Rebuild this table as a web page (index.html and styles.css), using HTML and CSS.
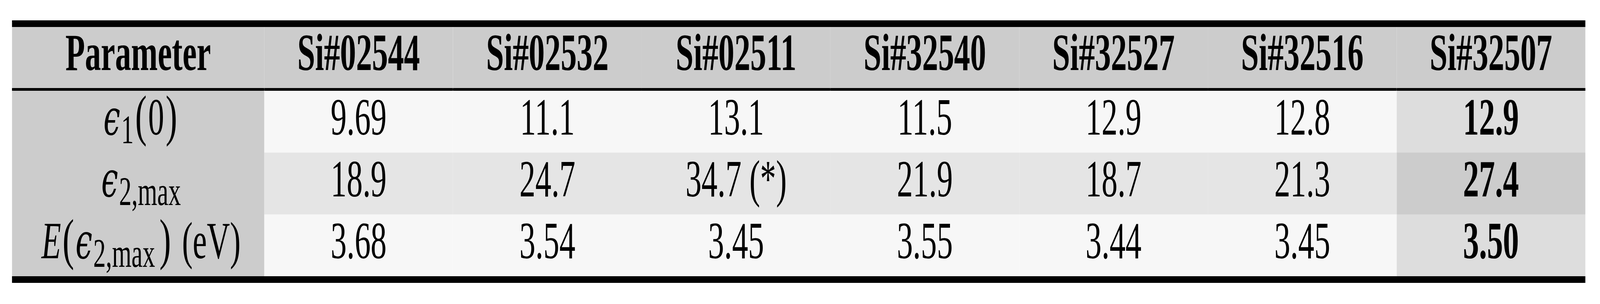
FILE: index.html
```html
<!DOCTYPE html>
<html>
<head>
<meta charset="utf-8">
<link rel="stylesheet" href="styles.css">
</head>
<body>
<div class="frame">
  <div class="page" id="page">
    <div class="table">
      <div class="cell head">Parameter</div>
      <div class="cell head">Si#02544</div>
      <div class="cell head">Si#02532</div>
      <div class="cell head">Si#02511</div>
      <div class="cell head">Si#32540</div>
      <div class="cell head">Si#32527</div>
      <div class="cell head">Si#32516</div>
      <div class="cell head">Si#32507</div>

      <div class="cell param"><span class="eps">ϵ</span><span class="sub">1</span><span class="big">(</span>0<span class="big">)</span></div>
      <div class="cell light">9.69</div>
      <div class="cell light">11.1</div>
      <div class="cell light">13.1</div>
      <div class="cell light">11.5</div>
      <div class="cell light">12.9</div>
      <div class="cell light">12.8</div>
      <div class="cell best-light">12.9</div>

      <div class="cell param"><span class="eps">ϵ</span><span class="sub">2,max</span></div>
      <div class="cell mid">18.9</div>
      <div class="cell mid">24.7</div>
      <div class="cell mid">34.7 (*)</div>
      <div class="cell mid">21.9</div>
      <div class="cell mid">18.7</div>
      <div class="cell mid">21.3</div>
      <div class="cell best-mid">27.4</div>

      <div class="cell param"><span class="ital">E</span><span class="big">(</span><span class="eps">ϵ</span><span class="sub sub-close">2,max</span><span class="big">)</span><span class="unit">(eV)</span></div>
      <div class="cell light">3.68</div>
      <div class="cell light">3.54</div>
      <div class="cell light">3.45</div>
      <div class="cell light">3.55</div>
      <div class="cell light">3.44</div>
      <div class="cell light">3.45</div>
      <div class="cell best-light">3.50</div>
    </div>
  </div>
</div>
<script src="script.js"></script>
</body>
</html>
```

FILE: script.js
```js
// The design is laid out for a 6659px-wide window; if the real window is
// narrower (browsers clamp very wide windows), squeeze it horizontally to fit.
(function () {
  var page = document.getElementById('page');
  var s = Math.min(1, window.innerWidth / 6659);
  if (s < 1) {
    page.style.transform = 'scaleX(' + s + ')';
  }
})();
```

FILE: styles.css
```css
html, body {
  margin: 0;
  padding: 0;
  background: #ffffff;
}
body {
  overflow: hidden;
  font-family: "Liberation Serif", "DejaVu Serif", serif;
  color: #000;
}
.frame {
  width: 100%;
  height: 777px;
  overflow: hidden;
}
.page {
  box-sizing: border-box;
  width: 6659px;
  padding: 52px 0 0 50px;
  transform-origin: 0 0;
}
.table {
  display: grid;
  grid-template-columns: 1050px repeat(7, minmax(0, 1fr));
  width: 6548px;
  border-top: 17px solid #000;
  border-bottom: 17px solid #000;
}
.cell {
  box-sizing: border-box;
  text-align: center;
  font-size: 133px;
  white-space: nowrap;
  height: 158px;
  line-height: 135px;
  padding-bottom: 23px;
}
.head {
  background: #cccccc;
  font-weight: bold;
  height: 163px;
  line-height: 130px;
  padding-bottom: 26px;
  border-bottom: 7px solid #000;
}
.param {
  background: #cccccc;
  padding-left: 24px;
}
.light { background: #f7f7f7; }
.mid { background: #e5e5e5; }
.best-light { background: #dddddd; font-weight: bold; }
.best-mid { background: #cccccc; font-weight: bold; }

.eps {
  font-family: "DejaVu Serif", serif;
  font-style: italic;
  font-size: 125px;
  line-height: 0;
}
.ital {
  font-style: italic;
}
.sub {
  font-size: 104px;
  vertical-align: -22px;
  line-height: 0;
  margin-left: 4px;
}
.sub-close {
  margin-right: 12px;
}
.big {
  font-size: 145px;
  font-weight: normal;
  line-height: 0;
  margin: 0 6px;
}
.unit {
  margin-left: 40px;
}
```
